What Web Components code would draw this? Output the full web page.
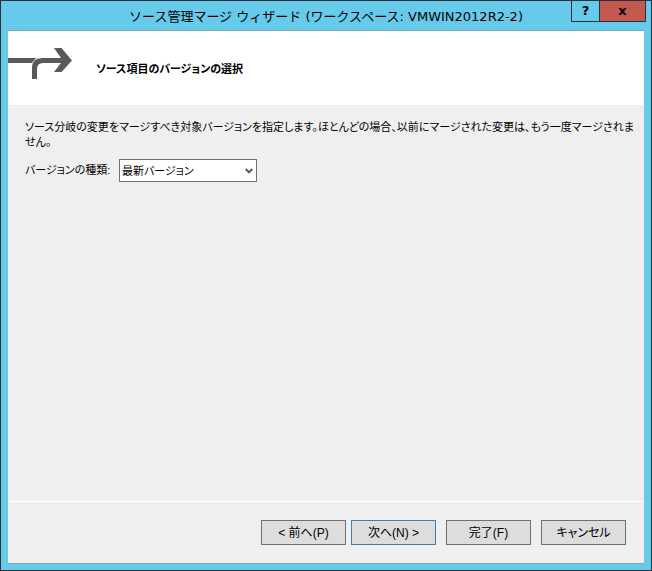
<!DOCTYPE html>
<html lang="ja">
<head>
<meta charset="utf-8">
<title>ソース管理マージ ウィザード</title>
<style>
    html, body{
        height: 100%;
        margin: 0;
    }
    body{
        font-family: "Liberation Sans", "Noto Sans CJK JP", sans-serif;
        font-size: 12px;
        line-height: 15px;
        color: #000;
    }
</style>
</head>
<body>

<wizard-window>
    <span slot="title">ソース管理マージ ウィザード (ワークスペース: VMWIN2012R2-2)</span>
    <wizard-header slot="header">ソース項目のバージョンの選択</wizard-header>
    <wizard-page>
        <span slot="intro">ソース分岐の変更をマージすべき対象バージョンを指定します。ほとんどの場合、以前にマージされた変更は、もう一度マージされません。</span>
        <select-field label="バージョンの種類:" options="最新バージョン"></select-field>
    </wizard-page>
    <wizard-footer slot="footer">
        <wizard-button slot="steps">&lt; 前へ(P)</wizard-button>
        <wizard-button slot="steps" primary>次へ(N) &gt;</wizard-button>
        <wizard-button>完了(F)</wizard-button>
        <wizard-button>キャンセル</wizard-button>
    </wizard-footer>
</wizard-window>

<script>
/**
 *   <wizard-window>
 *       <span slot="title">...</span>
 *       slots: title, header, (default), footer
 *   </wizard-window>
 */
const windowtpl = document.createElement('template');
windowtpl.innerHTML = `
    <style>
        :host{
            display: flex;
            flex-direction: column;
            position: relative;
            box-sizing: border-box;
            min-height: 100%;
            padding: 0 7px 6px;
            border: 1px solid #2f2f38;
            background: #66caea;
            font-feature-settings: "palt";
        }
        #titlebar{
            display: flex;
            justify-content: center;
            align-items: center;
            height: 29px;
        }
        h1{
            margin: 0;
            padding-top: 2px;
            font: 13px/24px "DejaVu Sans", "Noto Sans CJK JP", sans-serif;
            white-space: nowrap;
        }
        /* the caption buttons hang from the frame, over the title bar */
        #caption{
            position: absolute;
            top: -1px;
            right: 5px;
            display: flex;
        }
        #caption button{
            box-sizing: border-box;
            width: 29px;
            height: 22px;
            margin: 0;
            padding: 0;
            border: 1px solid #2f2f38;
            background: transparent;
            color: #000;
            font: bold 13px/20px "DejaVu Sans", sans-serif;
        }
        #caption #close{
            width: 47px;
            margin-left: -1px;
            background: #c35a50;
        }
        #client{
            flex: 1;
            display: flex;
            flex-direction: column;
            border-top: 1px solid #76a9c2;
            border-bottom: 1px solid #76a9c2;
            background: #efefef;
        }
        main{
            flex: 1;
        }
    </style>
    <div id="titlebar"><h1><slot name="title"></slot></h1></div>
    <div id="caption">
        <button type="button" id="help">?</button>
        <button type="button" id="close">x</button>
    </div>
    <div id="client">
        <slot name="header"></slot>
        <main><slot></slot></main>
        <slot name="footer"></slot>
    </div>`;

class WizardWindow extends HTMLElement{
    constructor(){
        super()
        this.attachShadow({mode: 'open'});
        this.shadowRoot.appendChild(windowtpl.content.cloneNode(true));
        this.shadowRoot.querySelector('#close').addEventListener('click', () => {
            this.dispatchEvent(new CustomEvent('wizard-close', {bubbles: true}));
        });
    }
}
customElements.define('wizard-window', WizardWindow);


// White band with the merge arrow and the page's heading
const headertpl = document.createElement('template');
headertpl.innerHTML = `
    <style>
        :host{
            display: flex;
            align-items: center;
            gap: 24px;
            height: 74px;
            background: #fff;
        }
        svg{
            display: block;
        }
        h2{
            margin: 0;
            padding-top: 2px;
            font-size: 11px;
            line-height: 15px;
        }
    </style>
    <svg width="64" height="74" viewBox="0 0 64 74" aria-hidden="true">
        <path d="M0 27H28.500Q25.500 29 24 32H0Z" fill="#58595b"/>
        <path d="M24 48V37Q24 27 34 27H53L46 17H53.500L64 29.500L53.500 41H46L53 32H35Q29 32 29 38V48Z" fill="#58595b"/>
    </svg>
    <h2><slot></slot></h2>`;

class WizardHeader extends HTMLElement{
    constructor(){
        super()
        this.attachShadow({mode: 'open'});
        this.shadowRoot.appendChild(headertpl.content.cloneNode(true));
    }
}
customElements.define('wizard-header', WizardHeader);


const pagetpl = document.createElement('template');
pagetpl.innerHTML = `
    <style>
        :host{
            display: flex;
            flex-direction: column;
            gap: 9px;
            padding: 15px 10px 15px 17px;
        }
        p{
            margin: 0;
            font-size: 11px;
            line-height: 15px;
        }
    </style>
    <p><slot name="intro"></slot></p>
    <slot></slot>`;

class WizardPage extends HTMLElement{
    constructor(){
        super()
        this.attachShadow({mode: 'open'});
        this.shadowRoot.appendChild(pagetpl.content.cloneNode(true));
    }
}
customElements.define('wizard-page', WizardPage);


/**
 *   <select-field label="..." options="a,b,c"></select-field>
 */
const selecttpl = document.createElement('template');
selecttpl.innerHTML = `
    <style>
        :host{
            display: flex;
            align-items: center;
            gap: 8px;
            font-size: 11px;
        }
        label{
            min-width: 86px;
            white-space: nowrap;
        }
        #box{
            display: grid;
            align-items: center;
            width: 138px;
        }
        select, svg{
            grid-area: 1 / 1;
        }
        select{
            appearance: none;
            box-sizing: border-box;
            width: 100%;
            height: 23px;
            margin: 0;
            padding: 2px 20px 0 2px;
            border: 1px solid #707070;
            border-radius: 0;
            background: #fff;
            color: inherit;
            font: inherit;
            font-feature-settings: inherit;
        }
        svg{
            justify-self: end;
            margin-right: 4px;
            pointer-events: none;
        }
    </style>
    <label for="field"></label>
    <div id="box">
        <select id="field"></select>
        <svg width="8" height="6" viewBox="0 0 8 6" aria-hidden="true">
            <path d="M0.700 1L4 4.300L7.300 1" fill="none" stroke="#606060" stroke-width="2"/>
        </svg>
    </div>`;

class SelectField extends HTMLElement{
    constructor(){
        super()
        this.attachShadow({mode: 'open'});
        this.shadowRoot.appendChild(selecttpl.content.cloneNode(true));
    }

    connectedCallback(){
        this.update();
    }

    static get observedAttributes() {
        return ['label','options']
    }

    attributeChangedCallback(name, oldVal, newVal){
        this.update()
    }

    update(){
        this.shadowRoot.querySelector('label').textContent = this.getAttribute('label');
        const select = this.shadowRoot.querySelector('select');
        const options = (this.getAttribute('options') || '').split(',');
        select.replaceChildren(...options.map(text => new Option(text)));
    }
}
customElements.define('select-field', SelectField);


const footertpl = document.createElement('template');
footertpl.innerHTML = `
    <style>
        :host{
            display: flex;
            justify-content: flex-end;
            gap: 10px;
            padding: 18px;
            border-top: 1px solid #fff;
        }
        #steps{
            display: flex;
            gap: 5px;
        }
    </style>
    <div id="steps"><slot name="steps"></slot></div>
    <slot></slot>`;

class WizardFooter extends HTMLElement{
    constructor(){
        super()
        this.attachShadow({mode: 'open'});
        this.shadowRoot.appendChild(footertpl.content.cloneNode(true));
    }
}
customElements.define('wizard-footer', WizardFooter);


const buttontpl = document.createElement('template');
buttontpl.innerHTML = `
    <style>
        :host{
            display: block;
        }
        button{
            box-sizing: border-box;
            min-width: 85px;
            height: 25px;
            margin: 0;
            padding: 2px 4px 0;
            border: 1px solid #707070;
            background: #dddddd;
            color: inherit;
            font: inherit;
            font-feature-settings: inherit;
        }
        :host([primary]) button{
            border-color: #3c7fb1;
        }
    </style>
    <button type="button"><slot></slot></button>`;

class WizardButton extends HTMLElement{
    constructor(){
        super()
        this.attachShadow({mode: 'open'});
        this.shadowRoot.appendChild(buttontpl.content.cloneNode(true));
    }
}
customElements.define('wizard-button', WizardButton);
</script>
</body>
</html>
